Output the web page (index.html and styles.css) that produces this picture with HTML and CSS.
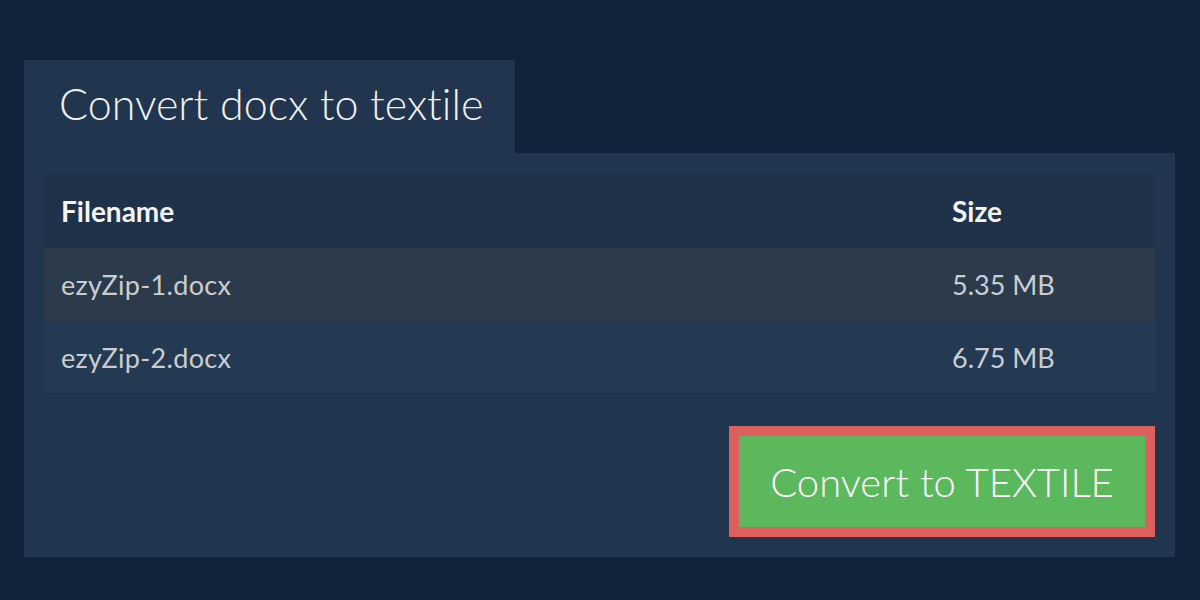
FILE: index.html
```html
<!DOCTYPE html>
<html>
<head>
<meta charset="utf-8">
<link rel="stylesheet" href="styles.css">
</head>
<body>
<div class="wrap">
  <div class="tab"><h1 class="title">Convert docx to textile</h1></div>
  <div class="panel">
    <div class="table">
      <div class="row head"><div class="c-name">Filename</div><div class="c-size">Size</div></div>
      <div class="row odd"><div class="c-name">ezyZip-1.docx</div><div class="c-size">5.35 MB</div></div>
      <div class="row even"><div class="c-name">ezyZip-2.docx</div><div class="c-size">6.75 MB</div></div>
    </div>
    <div class="actions">
      <button class="convert">Convert to TEXTILE</button>
    </div>
  </div>
</div>
</body>
</html>
```

FILE: styles.css
```css
html, body {
  margin: 0;
  padding: 0;
  background: #10233a;
  font-family: Lato, "Open Sans", sans-serif;
  font-variant-ligatures: none;
}
.wrap {
  padding: 60px 0 0 24px;
}
.tab {
  width: 491px;
  height: 93px;
  background: #21364e;
  box-sizing: border-box;
  padding-left: 35px;
  display: flex;
  align-items: center;
}
.title {
  margin: 0;
  font-weight: 300;
  font-size: 43px;
  color: #eef0f3;
  line-height: 1;
  padding-bottom: 6px;
}
.panel {
  width: 1151px;
  height: 404px;
  box-sizing: border-box;
  background: #21364e;
  padding: 21px 20px 20px 20px;
  display: flex;
  flex-direction: column;
}
.table {
  display: flex;
  flex-direction: column;
}
.row {
  display: flex;
  align-items: center;
  font-size: 27px;
}
.c-name {
  width: 908px;
  padding-left: 17px;
  box-sizing: border-box;
}
.odd .c-name,
.even .c-name {
  letter-spacing: 0.3px;
}
.c-size {
  flex: 1;
}
.head {
  height: 74px;
  background: #1f3249;
  color: #f2f4f6;
  font-weight: 700;
  font-size: 28px;
}
.odd {
  height: 73px;
  background: #2b3b4c;
  color: #c9cdd3;
}
.even {
  height: 72px;
  background: #243a52;
  color: #c9cdd3;
}
.actions {
  display: flex;
  justify-content: flex-end;
  margin-top: 33px;
}
.convert {
  width: 426px;
  height: 111px;
  box-sizing: border-box;
  border: 10px solid #dc605d;
  background: #5cb85c;
  color: #ffffff;
  font-family: Lato, sans-serif;
  font-variant-ligatures: none;
  font-weight: 300;
  font-size: 40px;
  padding: 0;
  margin: 0;
}
```
